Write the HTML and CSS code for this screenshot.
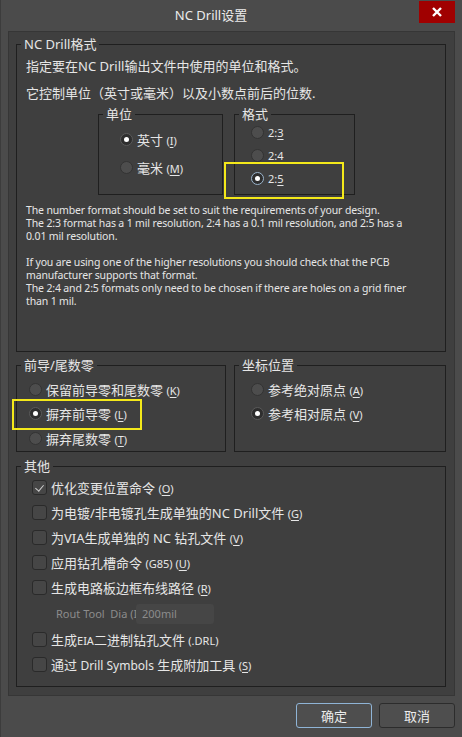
FILE: index.html
```html
<!DOCTYPE html>
<html lang="zh-CN">
<head>
    <meta charset="UTF-8">
    <title>NC Drill设置</title>
    <link rel="stylesheet" href="styles.css">
</head>
<body>
    <div class="window">
        <div class="titlebar">
            <span class="title">NC Drill设置</span>
            <button class="close" title="关闭">
                <svg width="10" height="10" viewBox="0 0 10 10"><path d="M1 1 L9 9 M9 1 L1 9" stroke="#fff" stroke-width="2.4"/></svg>
            </button>
        </div>

        <div class="panel">
            <fieldset class="group format-group">
                <legend>NC Drill格式</legend>
                <p class="intro">指定要在NC Drill输出文件中使用的单位和格式。</p>
                <p class="intro">它控制单位（英寸或毫米）以及小数点前后的位数.</p>

                <div class="subgroups">
                    <fieldset class="group units">
                        <legend>单位</legend>
                        <label class="option"><span class="radio checked"></span><span>英寸 <span class="key">(<u>I</u>)</span></span></label>
                        <label class="option"><span class="radio"></span><span>毫米 <span class="key">(<u>M</u>)</span></span></label>
                    </fieldset>
                    <fieldset class="group formats">
                        <legend>格式</legend>
                        <label class="option"><span class="radio"></span><span class="key">2:<u>3</u></span></label>
                        <label class="option"><span class="radio"></span><span class="key">2:<u>4</u></span></label>
                        <label class="option"><span class="radio checked focus"></span><span class="key">2:<u>5</u></span><span class="mark mark-format"></span></label>
                    </fieldset>
                </div>

                <p class="note">
                    The number format should be set to suit the requirements of your design.<br>
                    The 2:3 format has a 1 mil resolution, 2:4 has a 0.1 mil resolution, and 2:5 has a<br>
                    0.01 mil resolution.<br>
                    <br>
                    If you are using one of the higher resolutions you should check that the PCB<br>
                    manufacturer supports that format.<br>
                    The 2:4 and 2:5 formats only need to be chosen if there are holes on a grid finer<br>
                    than 1 mil.
                </p>
            </fieldset>

            <div class="row">
                <fieldset class="group zeros">
                    <legend>前导/尾数零</legend>
                    <label class="option"><span class="radio"></span><span>保留前导零和尾数零 <span class="key">(<u>K</u>)</span></span></label>
                    <label class="option"><span class="radio checked"></span><span>摒弃前导零 <span class="key">(<u>L</u>)</span></span><span class="mark mark-zero"></span></label>
                    <label class="option"><span class="radio"></span><span>摒弃尾数零 <span class="key">(<u>T</u>)</span></span></label>
                </fieldset>
                <fieldset class="group coords">
                    <legend>坐标位置</legend>
                    <label class="option"><span class="radio"></span><span>参考绝对原点 <span class="key">(<u>A</u>)</span></span></label>
                    <label class="option"><span class="radio checked"></span><span>参考相对原点 <span class="key">(<u>V</u>)</span></span></label>
                </fieldset>
            </div>

            <fieldset class="group other">
                <legend>其他</legend>
                <label class="check-row"><span class="checkbox checked"></span><span>优化变更位置命令 <span class="key">(<u>O</u>)</span></span></label>
                <label class="check-row"><span class="checkbox"></span><span>为电镀/非电镀孔生成单独的NC Drill文件 <span class="key">(<u>G</u>)</span></span></label>
                <label class="check-row"><span class="checkbox"></span><span>为VIA生成单独的 NC 钻孔文件 <span class="key">(<u>V</u>)</span></span></label>
                <label class="check-row"><span class="checkbox"></span><span>应用钻孔槽命令 <span class="key">(G85) (<u>U</u>)</span></span></label>
                <label class="check-row"><span class="checkbox"></span><span>生成电路板边框布线路径 <span class="key">(<u>R</u>)</span></span></label>
                <div class="rout-row">
                    <span class="rout-label">Rout Tool&nbsp; Dia (I</span><span class="rout-input">200mil</span>
                </div>
                <label class="check-row"><span class="checkbox"></span><span>生成<span class="small">EIA</span>二进制钻孔文件 <span class="key">(.DRL)</span></span></label>
                <label class="check-row"><span class="checkbox"></span><span>通过 <span class="latin">Drill Symbols</span> 生成附加工具 <span class="key">(<u>S</u>)</span></span></label>
            </fieldset>
        </div>

        <div class="actions">
            <button class="btn default">确定</button>
            <button class="btn">取消</button>
        </div>
    </div>
</body>
</html>
```

FILE: styles.css
```css
* {
    box-sizing: border-box;
}
body {
    margin: 0;
    background: #4b4b4b;
    font-family: "Noto Sans", "Noto Sans CJK SC", sans-serif;
    color: #e6e6e6;
}
.window {
    width: 462px;
    height: 737px;
    background: #4b4b4b;
    border-left: 1px solid #3c3c3c;
}
.titlebar {
    height: 31px;
    display: flex;
    align-items: flex-start;
}
.title {
    flex: 1;
    text-align: center;
    font-size: 13px;
    line-height: 31px;
    color: #ececec;
    padding-left: 2px;
}
.close {
    width: 36px;
    height: 22px;
    margin-top: 1px;
    margin-right: 7px;
    border: none;
    background: #a00000;
    display: flex;
    align-items: center;
    justify-content: center;
    padding: 0;
}
.panel {
    margin-left: 7px;
    width: 447px;
    height: 665px;
    background: #3f3f3f;
    border: 1px solid #363636;
    padding: 5px 8px 0 7px;
}

/* group boxes */
.group {
    margin: 0;
    border: 1px solid #1f1f1f;
    padding: 0 4px;
    min-width: 0;
    position: relative;
}
.group legend {
    padding: 0 3px;
    font-size: 13px;
    line-height: 14px;
    color: #e6e6e6;
}
.format-group {
    height: 315px;
}
.intro {
    margin: 0 0 0 5px;
    font-size: 13px;
    line-height: 27px;
    white-space: nowrap;
}
.intro:first-of-type {
    margin-top: 2px;
}
.subgroups {
    display: flex;
    gap: 11px;
    margin-left: 77px;
}
.units {
    width: 125px;
    height: 88px;
    padding-top: 4px;
}
.units .option {
    height: 28px;
    padding-left: 17px;
}
.formats {
    width: 121px;
    height: 88px;
}
.formats .option {
    height: 23px;
    padding-left: 12px;
}
.note {
    margin: 9px 0 0 5px;
    font-size: 10.5px;
    letter-spacing: -0.15px;
    line-height: 13px;
    white-space: nowrap;
    color: #e6e6e6;
}

.option,
.check-row {
    display: flex;
    align-items: center;
    gap: 4px;
    font-size: 13px;
    white-space: nowrap;
    position: relative;
}
.key {
    font-size: 11px;
}
.key u {
    text-underline-offset: 2px;
}

.radio {
    width: 13px;
    height: 13px;
    border-radius: 50%;
    background: #4d4d4d;
    border: 1px solid #333;
    flex: none;
    position: relative;
}
.radio.checked {
    background: #2e2e2e;
    border-color: #5a5a5a;
}
.radio.checked::after {
    content: "";
    position: absolute;
    left: 3px;
    top: 3px;
    width: 5px;
    height: 5px;
    border-radius: 50%;
    background: #fff;
}
.radio.focus {
    border-color: #9ab4cc;
}

/* yellow highlight boxes */
.mark {
    position: absolute;
    border: 2px solid #f4e81a;
    pointer-events: none;
}
.mark-format {
    left: -15px;
    top: -5px;
    width: 120px;
    height: 37px;
}
.mark-zero {
    left: -9px;
    top: -3px;
    width: 130px;
    height: 31px;
}

.row {
    display: flex;
    gap: 8px;
    margin-top: 6px;
}
.zeros {
    width: 210px;
    height: 94px;
    padding-top: 5px;
}
.coords {
    width: 212px;
    height: 94px;
    padding-top: 5px;
}
.zeros .option {
    height: 24.5px;
    padding-left: 8px;
}
.coords .option {
    height: 24.5px;
    padding-left: 12px;
}

.other {
    margin-top: 7px;
    height: 228px;
    padding-top: 2px;
}
.check-row {
    height: 25px;
    padding-left: 11px;
}
.checkbox {
    width: 15px;
    height: 15px;
    border-radius: 3px;
    background: #464646;
    border: 1px solid #2a2a2a;
    flex: none;
    position: relative;
}
.checkbox.checked::after {
    content: "";
    position: absolute;
    left: 4px;
    top: 2px;
    width: 4px;
    height: 7px;
    border: solid #cfcfcf;
    border-width: 0 1px 1px 0;
    transform: rotate(40deg);
}
.small {
    font-size: 11px;
}
.latin {
    font-size: 12px;
}
.rout-row {
    height: 27px;
    display: flex;
    align-items: center;
    padding-left: 35px;
    font-size: 11px;
    color: #8c8c8c;
}
.rout-label {
    width: 80px;
    overflow: hidden;
    white-space: nowrap;
}
.rout-input {
    width: 78px;
    height: 20px;
    line-height: 20px;
    background: #464646;
    border-radius: 3px;
    padding-left: 6px;
    color: #8c8c8c;
    font-size: 11px;
}

.actions {
    display: flex;
    justify-content: flex-end;
    gap: 7px;
    margin: 7px 7px 0 0;
}
.btn {
    width: 76px;
    height: 25px;
    background: #4e4e4e;
    border: 1px solid #2c2c2c;
    border-radius: 3px;
    color: #ececec;
    font-family: "Noto Sans CJK SC", sans-serif;
    font-size: 13px;
    padding: 0;
}
.btn.default {
    border-color: #8fb4d6;
}
```
